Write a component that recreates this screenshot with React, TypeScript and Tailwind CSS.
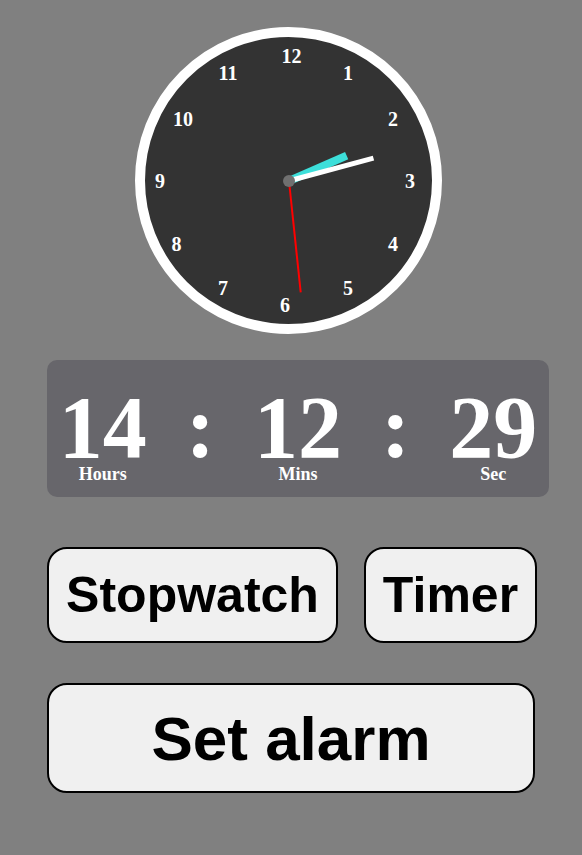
import React from 'react';

const time = { h: 14, m: 12, s: 29 };

// centre of the face inside the 10px border
const C = 143.5;

const numbers: { n: number; x: number; y: number }[] = [
  { n: 12, x: 156.5, y: 29 },
  { n: 1, x: 213, y: 45.5 },
  { n: 2, x: 258, y: 92 },
  { n: 3, x: 275, y: 154 },
  { n: 4, x: 258, y: 217 },
  { n: 5, x: 213, y: 261 },
  { n: 6, x: 150, y: 278 },
  { n: 7, x: 88, y: 261 },
  { n: 8, x: 41.5, y: 217 },
  { n: 9, x: 25, y: 154 },
  { n: 10, x: 48, y: 92 },
  { n: 11, x: 93, y: 45.5 },
];

function Hand({ length, width, angle, className }: { length: number; width: number; angle: number; className: string }) {
  return (
    <div
      className={`absolute origin-bottom ${className}`}
      style={{
        left: C - width / 2,
        top: C - length,
        width,
        height: length,
        transform: `rotate(${angle}deg)`,
      }}
    />
  );
}

function AnalogClock() {
  const sec = time.s * 6;
  const min = (time.m + time.s / 60) * 6;
  const hour = ((time.h % 12) + time.m / 60 + time.s / 3600) * 30;

  return (
    <div className="relative w-[307px] h-[307px] rounded-full border-[10px] border-white bg-[#333333]">
      {numbers.map((item) => (
        <span
          key={item.n}
          className="absolute -translate-x-1/2 -translate-y-1/2 text-[20px] leading-none font-bold text-white"
          style={{ left: item.x - 10, top: item.y - 10 }}
        >
          {item.n}
        </span>
      ))}
      <Hand length={63} width={8} angle={hour} className="bg-[#3ddfda]" />
      <Hand length={88} width={5} angle={min} className="bg-white" />
      <Hand length={112} width={2} angle={sec} className="bg-[#ff0000]" />
      <div className="absolute w-[12px] h-[12px] rounded-full bg-[#707070]" style={{ left: C - 6, top: C - 6 }} />
    </div>
  );
}

function Unit({ value, label }: { value: string; label: string }) {
  return (
    <div className="flex flex-col items-center">
      <span className="text-[88px] leading-[0.8] font-bold text-white">{value}</span>
      <span className="mt-[2px] text-[18px] leading-none font-bold text-white">{label}</span>
    </div>
  );
}

function Colon() {
  return (
    <div className="flex flex-col items-center">
      <span className="text-[88px] leading-[0.8] font-bold text-white">:</span>
    </div>
  );
}

const pad = (n: number) => String(n).padStart(2, '0');

export default function App() {
  return (
    <div className="min-h-[855px] w-full bg-[#808080] pl-[47px] pt-[27px] font-['Liberation_Serif',serif]">
      <div className="ml-[88px]">
        <AnalogClock />
      </div>

      <div className="mt-[26px] w-[502px] h-[137px] rounded-[10px] bg-[#67666b] px-[7px] pt-[33px] grid grid-cols-5 items-start">
        <Unit value={pad(time.h)} label="Hours" />
        <Colon />
        <Unit value={pad(time.m)} label="Mins" />
        <Colon />
        <Unit value={pad(time.s)} label="Sec" />
      </div>

      <div className="mt-[50px] flex gap-[26px] font-['Liberation_Sans',Arial,sans-serif] font-bold text-black">
        <button className="w-[291px] h-[96px] rounded-[20px] border-2 border-black bg-[#f0f0f0] text-[50px] flex items-center justify-center">
          Stopwatch
        </button>
        <button className="w-[173px] h-[96px] rounded-[20px] border-2 border-black bg-[#f0f0f0] text-[50px] flex items-center justify-center">
          Timer
        </button>
      </div>

      <button className="mt-[40px] w-[488px] h-[110px] rounded-[20px] border-2 border-black bg-[#f0f0f0] text-[62px] font-bold text-black font-['Liberation_Sans',Arial,sans-serif] flex items-center justify-center">
        Set alarm
      </button>
    </div>
  );
}
